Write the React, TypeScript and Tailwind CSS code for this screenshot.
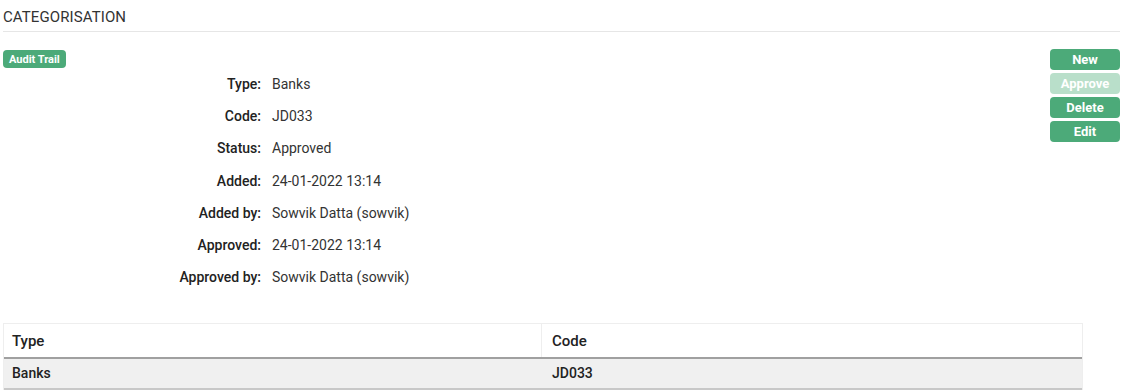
import React from "react";

const rows: [string, string][] = [
  ["Type:", "Banks"],
  ["Code:", "JD033"],
  ["Status:", "Approved"],
  ["Added:", "24-01-2022 13:14"],
  ["Added by:", "Sowvik Datta (sowvik)"],
  ["Approved:", "24-01-2022 13:14"],
  ["Approved by:", "Sowvik Datta (sowvik)"],
];

export default function App() {
  return (
    <div className="w-[1126px] h-[391px] bg-white text-[#333] overflow-hidden" style={{ fontFamily: "Roboto, 'Liberation Sans', sans-serif" }}>
      <div className="pl-[3px] pr-[6px]">
        <div className="h-[32px] pt-[4px] border-b border-[#e6e6e6] flex items-center text-[15px] text-[#333] tracking-[0.1px]">
          CATEGORISATION
        </div>
        <div className="flex justify-between">
          <div className="flex flex-col">
            <div className="mt-[18px] flex">
              <span className="h-[18px] px-[6px] rounded-[4px] bg-[#4caa79] text-white text-[11px] font-bold flex items-center leading-none">
                Audit Trail
              </span>
            </div>
            <div className="flex flex-col">
              {rows.map(([l, v]) => (
                <div key={l} className="h-[32.3px] flex items-center text-[14px]">
                  <div className="w-[258px] text-right font-medium text-[#222]">{l}</div>
                  <div className="ml-[11px] text-[#333]">{v}</div>
                </div>
              ))}
            </div>
          </div>
          <div className="mt-[17px] flex flex-col gap-[3px] w-[70px]">
            {["New", "Approve", "Delete", "Edit"].map((b) => (
              <div
                key={b}
                className={
                  "h-[21px] rounded-[4px] flex items-center justify-center text-white text-[13px] font-bold " +
                  (b === "Approve" ? "bg-[#b9dfca]" : "bg-[#4caa79]")
                }
              >
                {b}
              </div>
            ))}
          </div>
        </div>
        <div className="mt-[29px] w-[1080px] border border-[#eeeeee] border-b-0">
          <div className="flex h-[35px] items-center border-b-2 border-[#a0a0a0] text-[15px] font-medium text-[#222]">
            <div className="w-[538px] h-full flex items-center pl-[8px] pt-[2px] border-r border-[#eeeeee]">Type</div>
            <div className="flex-1 pl-[10px] pt-[2px]">Code</div>
          </div>
          <div className="flex h-[31px] items-center bg-[#f0f0f0] border-b-2 border-[#c8c8c8] text-[14px] font-medium text-[#222]">
            <div className="w-[538px] pl-[8px]">Banks</div>
            <div className="flex-1 pl-[10px]">JD033</div>
          </div>
        </div>
      </div>
    </div>
  );
}
